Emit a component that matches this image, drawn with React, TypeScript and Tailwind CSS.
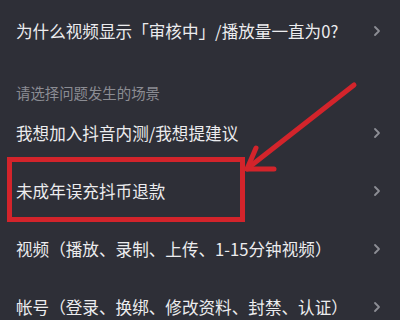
import React from "react";

const Chevron = () => (
  <svg width="10" height="12" viewBox="0 0 10 12" className="shrink-0">
    <path d="M3 2 L7 6 L3 10" fill="none" stroke="#8d8e95" strokeWidth="1.8" strokeLinecap="round" strokeLinejoin="round" />
  </svg>
);

const Row = ({ text, className = "" }: { text: string; className?: string }) => (
  <div className={`flex h-[58px] items-center justify-between pl-4 pr-[18px] ${className}`}>
    <span className="text-[16.6px] leading-[22px] text-[#ececee]">{text}</span>
    <Chevron />
  </div>
);

export default function App() {
  return (
    <div
      className="relative h-[320px] w-[400px] overflow-hidden bg-[#2e2f37]"
      style={{ fontFamily: '"Noto Sans CJK SC", "Noto Sans", sans-serif' }}
    >
      <div className="flex flex-col pt-[2px]">
        <Row text="为什么视频显示「审核中」/播放量一直为0?" />
        <div className="h-[44px] pl-4 pt-[20px]">
          <span className="text-[14.4px] leading-[20px] text-[#8b8c93]">请选择问题发生的场景</span>
        </div>
        <Row text="我想加入抖音内测/我想提建议" />
        <Row text="未成年误充抖币退款" />
        <Row text="视频（播放、录制、上传、1-15分钟视频）" />
        <Row text="帐号（登录、换绑、修改资料、封禁、认证）" />
      </div>
      <div className="absolute left-[7px] top-[157px] h-[65px] w-[238px] border-[5px] border-[#d3242b]" />
      <svg className="absolute left-0 top-0" width="400" height="320" viewBox="0 0 400 320">
        <g stroke="#d3242b" strokeWidth="5" strokeLinecap="round" fill="none">
          <line x1="354" y1="85" x2="248" y2="168" />
          <line x1="247" y1="169" x2="256" y2="148" />
          <line x1="247" y1="169" x2="274" y2="169" />
        </g>
      </svg>
    </div>
  );
}
